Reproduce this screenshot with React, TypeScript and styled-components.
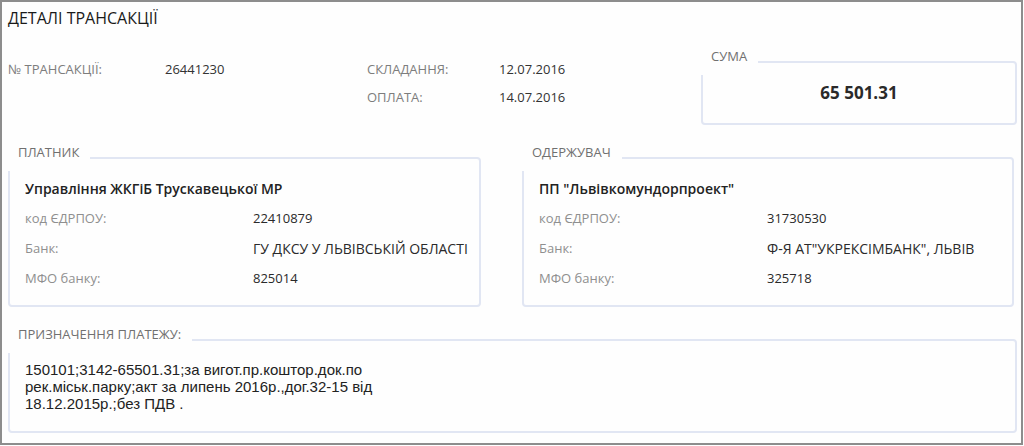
import React from "react";
import styled, { createGlobalStyle } from "styled-components";

type Party = {
  role: string;
  name: string;
  code: string;
  bank: string;
  mfo: string;
};

const payer: Party = {
  role: "Платник",
  name: "Управління ЖКГіБ Трускавецької МР",
  code: "22410879",
  bank: "ГУ ДКСУ У ЛЬВІВСЬКІЙ ОБЛАСТІ",
  mfo: "825014",
};

const receiver: Party = {
  role: "Одержувач",
  name: "ПП \"Львівкомундорпроект\"",
  code: "31730530",
  bank: "Ф-Я АТ\"УКРЕКСІМБАНК\", ЛЬВІВ",
  mfo: "325718",
};

const purpose = `150101;3142-65501.31;за вигот.пр.коштор.док.по
рек.міськ.парку;акт за липень 2016р.,дог.32-15 від
18.12.2015р.;без ПДВ .`;

function PartyCard({ party }: { party: Party }) {
  return (
    <Group>
      <Legend>{party.role}</Legend>
      <PartyBody>
        <PartyName>{party.name}</PartyName>
        <Label>код ЄДРПОУ:</Label>
        <Value>{party.code}</Value>
        <Label>Банк:</Label>
        <Value $text>{party.bank}</Value>
        <Label>МФО банку:</Label>
        <Value>{party.mfo}</Value>
      </PartyBody>
    </Group>
  );
}

export default function App() {
  return (
    <>
      <GlobalStyle />
      <Frame>
        <Title>Деталі трансакції</Title>
        <TopSection>
          <InfoGrid>
            <InfoLabel>№ трансакції:</InfoLabel>
            <InfoValue>26441230</InfoValue>
            <InfoLabel>Складання:</InfoLabel>
            <InfoValue>12.07.2016</InfoValue>
            <span />
            <span />
            <InfoLabel>Оплата:</InfoLabel>
            <InfoValue>14.07.2016</InfoValue>
          </InfoGrid>
          <SumGroup>
            <Legend>Сума</Legend>
            <Amount>65 501.31</Amount>
          </SumGroup>
        </TopSection>
        <Parties>
          <PartyCard party={payer} />
          <PartyCard party={receiver} />
        </Parties>
        <Group>
          <Legend>Призначення платежу:</Legend>
          <Purpose>{purpose}</Purpose>
        </Group>
      </Frame>
    </>
  );
}

const GlobalStyle = createGlobalStyle`
  html, body {
    margin: 0;
    padding: 0;
    background: #ffffff;
  }
  body {
    font-family: "Open Sans", "Noto Sans", sans-serif;
  }
`;

const Frame = styled.div`
  box-sizing: border-box;
  width: 1023px;
  height: 445px;
  overflow: hidden;
  border: 2px solid #8d8d8d;
  padding: 6px 4px 0 6px;
  background: #fefefe;
`;

const Title = styled.h1`
  margin: 0;
  font-size: 16px;
  line-height: 20px;
  font-weight: 500;
  color: #1a1a1a;
  text-transform: uppercase;
`;

const TopSection = styled.section`
  display: flex;
  align-items: flex-start;
  margin-top: 21px;
`;

const InfoGrid = styled.div`
  flex: 1;
  display: grid;
  grid-template-columns: 157px 202px 132px 1fr;
  grid-auto-rows: 28px;
  align-items: center;
  padding-top: 6px;
`;

const InfoLabel = styled.span`
  font-size: 13px;
  color: #7d7d7d;
  text-transform: uppercase;
`;

const InfoValue = styled.span`
  font-size: 13px;
  color: #333333;
`;

const Group = styled.fieldset`
  margin: 0;
  padding: 0;
  min-width: 0;
  border: 2px solid #e1e6f3;
  border-radius: 4px;
`;

/* white legend box opens the top border from the very corner */
const Legend = styled.legend`
  margin-left: -2px;
  padding: 0 11px 12px 10px;
  font-size: 13px;
  line-height: 14px;
  color: #707070;
  text-transform: uppercase;
`;

const SumGroup = styled(Group)`
  width: 316px;
  box-sizing: border-box;
`;

const Amount = styled.div`
  padding: 6px 0 18px;
  text-align: center;
  font-size: 17px;
  line-height: 24px;
  font-weight: 700;
  color: #2a2a2a;
`;

const Parties = styled.section`
  display: grid;
  grid-template-columns: 473px 492px;
  column-gap: 41px;
  margin-top: 20px;
  margin-bottom: 20px;
`;

const PartyBody = styled.div`
  display: grid;
  grid-template-columns: 228px 1fr;
  grid-auto-rows: 30px;
  align-items: center;
  padding: 2px 12px 12px 15px;
`;

const PartyName = styled.div`
  grid-column: 1 / -1;
  font-size: 14px;
  font-weight: 600;
  color: #222222;
`;

const Label = styled.span`
  font-size: 13px;
  color: #8f8f8f;
`;

const Value = styled.span<{ $text?: boolean }>`
  font-size: ${(p) => (p.$text ? "14px" : "13px")};
  color: #2a2a2a;
  white-space: nowrap;
`;

const Purpose = styled.div`
  padding: 8px 16px 19px 15px;
  font-family: "Liberation Sans", Arial, sans-serif;
  font-size: 15px;
  line-height: 17px;
  color: #222222;
  white-space: pre-line;
`;
